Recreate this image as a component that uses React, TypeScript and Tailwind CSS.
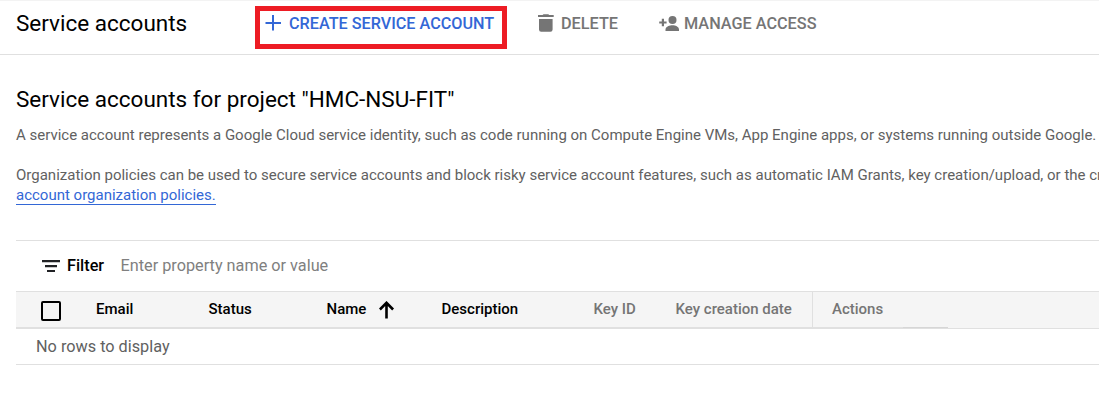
import React from "react";

function PlusIcon() {
  return (
    <svg width="16" height="16" viewBox="0 0 16 16" className="shrink-0" fill="#3367d6">
      <path d="M7 0h2v7h7v2H9v6.500H7V9H.5V7H7z" />
    </svg>
  );
}

function TrashIcon() {
  return (
    <svg width="16" height="18" viewBox="0 0 16 18" className="shrink-0" fill="#757575">
      <path d="M0 1h4.600L5.500.2h4.800l.9.800h4.500v2H0zM1 5h13.600v10.500a2.200 2.200 0 0 1-2.200 2.200H3.200A2.200 2.200 0 0 1 1 15.500z" />
    </svg>
  );
}

function PersonAddIcon() {
  return (
    <svg width="20" height="15" viewBox="0 0 20 15" className="shrink-0" fill="#757575">
      <circle cx="13.500" cy="4" r="4" />
      <path d="M6.500 15v-1.600c0-2.800 4.200-4.200 7-4.200s6.500 1.400 6.500 4.200V15zM2.800 2.700h2.200v2.700h2.600v2.200H5v2.700H2.800V7.600H.2V5.400h2.600z" />
    </svg>
  );
}

function FilterIcon() {
  return (
    <svg width="18" height="12" viewBox="0 0 18 12" className="shrink-0" fill="#202124">
      <path d="M0 0h18v2.200H0zM3 5h12v2.200H3zM5 10h8v2H5z" />
    </svg>
  );
}

function ArrowUpIcon() {
  return (
    <svg width="16" height="18" viewBox="0 0 16 18" className="shrink-0" fill="none" stroke="#000" strokeWidth="2.600">
      <path d="M7.500 17.500V2M.9 8.500l6.600-6.700 6.600 6.700" />
    </svg>
  );
}

export default function App() {
  return (
    <div className="h-[407px] w-[1099px] overflow-hidden whitespace-nowrap bg-white font-['Roboto',sans-serif] text-[15px] leading-5 text-[#616161]">
      <header className="flex h-[55px] items-start border-y border-b-[#e0e0e0] border-t-[#f3f3f3] pl-4">
        <h1 className="mt-[7px] w-[239px] text-[22.5px] leading-[30px] text-black">Service accounts</h1>
        <div className="mt-[5px] flex h-[43px] w-[252px] items-start border-5 border-[#ed1c24] pl-[5px] pt-1 font-medium text-[#3367d6]">
          <div className="flex h-4 items-center gap-2">
            <PlusIcon />
            <span className="pt-[2px] text-[16.220px]">CREATE SERVICE ACCOUNT</span>
          </div>
        </div>
        <div className="ml-[31px] mt-3 flex h-5 items-center gap-[7px] font-medium text-[#757575]">
          <TrashIcon />
          <span className="pt-[2px] text-[16.250px]">DELETE</span>
        </div>
        <div className="ml-[41px] mt-3 flex h-5 items-center gap-[5px] font-medium text-[#757575]">
          <PersonAddIcon />
          <span className="pt-[2px] text-[16.250px]">MANAGE ACCESS</span>
        </div>
      </header>
      <main className="pl-4">
        <h2 className="pt-[29px] text-[22.5px] leading-[30px] text-black">Service accounts for project "HMC-NSU-FIT"</h2>
        <p className="mt-[11px]">
          A service account represents a Google Cloud service identity, such as code running on Compute Engine VMs, App Engine apps, or systems running outside Google.
        </p>
        <p className="mt-5">
          Organization policies can be used to secure service accounts and block risky service account features, such as automatic IAM Grants, key creation/upload, or the cr
        </p>
        <a className="block h-5 w-[200px] border-b border-[#3367d6] text-[#3367d6]">account organization policies.</a>
        <section className="mt-[35px] border-t border-[#e0e0e0]">
          <div className="flex h-[50px] items-center pl-[26px] text-[16.250px]">
            <FilterIcon />
            <span className="ml-[7px] w-[53.500px] font-medium text-black">Filter</span>
            <span className="text-[#808080]">Enter property name or value</span>
          </div>
          <div className="flex h-[38px] border-b border-t border-[#e0e0e0] bg-[#f5f5f5] font-medium text-black">
            <div className="flex h-9 w-[796px] shrink-0 items-start border-b border-[#e0e0e0] pt-[7px]">
              <span className="ml-[25px] mt-[2px] size-5 rounded-[2px] border-2 border-black" />
              <span className="ml-[35px] w-[112.500px]">Email</span>
              <span className="w-[118px]">Status</span>
              <span className="w-[52px]">Name</span>
              <span className="mt-[2px] w-[63px]"><ArrowUpIcon /></span>
              <span className="w-[152px]">Description</span>
              <span className="w-[82px] text-[#757575]">Key ID</span>
              <span className="text-[#757575]">Key creation date</span>
            </div>
            <div className="h-9 w-[91px] border-b border-l border-[#e0e0e0] pl-[19px] pt-[7px] text-[#757575]">Actions</div>
            <div className="h-9 w-[45px] border-b border-[#d6d6d6]" />
          </div>
          <div className="h-9 border-b border-[#e0e0e0] pl-5 pt-2 text-[16.250px]">No rows to display</div>
        </section>
      </main>
    </div>
  );
}
